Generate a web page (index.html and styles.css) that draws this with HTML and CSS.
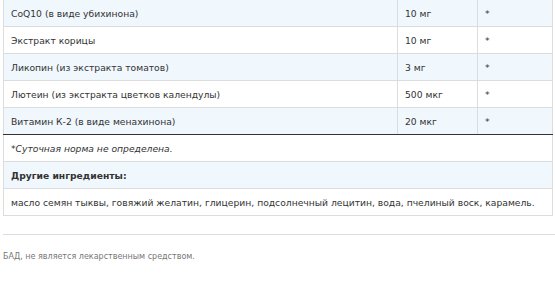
FILE: index.html
```html
<!DOCTYPE html>
<html lang="ru">
<head>
<meta charset="utf-8">
<link rel="stylesheet" href="styles.css">
</head>
<body>
<div class="page">
  <table class="facts">
    <colgroup><col class="c1"><col class="c2"><col class="c3"></colgroup>
    <tbody>
      <tr class="alt"><td>CoQ10 (в виде убихинона)</td><td>10 мг</td><td>*</td></tr>
      <tr><td>Экстракт корицы</td><td>10 мг</td><td>*</td></tr>
      <tr class="alt"><td>Ликопин (из экстракта томатов)</td><td>3 мг</td><td>*</td></tr>
      <tr><td>Лютеин (из экстракта цветков календулы)</td><td>500 мкг</td><td>*</td></tr>
      <tr class="alt last"><td>Витамин К-2 (в виде менахинона)</td><td>20 мкг</td><td>*</td></tr>
      <tr><td colspan="3" class="note">*Суточная норма не определена.</td></tr>
      <tr class="alt"><td colspan="3" class="head">Другие ингредиенты:</td></tr>
      <tr><td colspan="3">масло семян тыквы, говяжий желатин, глицерин, подсолнечный лецитин, вода, пчелиный воск, карамель.</td></tr>
    </tbody>
  </table>
  <div class="rule"></div>
  <p class="disclaimer">БАД, не является лекарственным средством.</p>
</div>
</body>
</html>
```
FILE: styles.css
```css
html, body { margin: 0; padding: 0; background: #fff; }
body { font-family: "DejaVu Sans", sans-serif; color: #333; }
.page { padding-left: 3px; overflow: hidden; }
.facts {
  border-collapse: collapse;
  width: 549px;
  margin-top: -1px;
  table-layout: fixed;
  font-size: 9.2px;
}
.c1 { width: 394px; }
.c2 { width: 80px; }
.c3 { width: 75px; }
.facts td {
  border: 1px solid #dcdcdc;
  height: 27px;
  padding: 0 0 0 7px;
  box-sizing: border-box;
  vertical-align: middle;
  white-space: nowrap;
}
.facts tr.alt td { background: #f0f7fd; }
.facts tr.last td { border-bottom: 1px solid #333; }
.note { font-style: italic; }
.head { font-weight: bold; }
.rule { height: 0; border-top: 1px solid #dcdcdc; margin-top: 18px; }
.disclaimer { margin: 17px 0 0; font-size: 8px; color: #777; }
```
